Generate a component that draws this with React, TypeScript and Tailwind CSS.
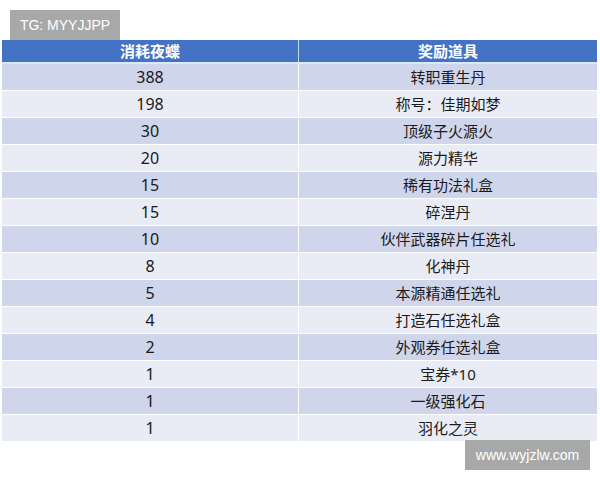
import React from "react";

const rows: [string, string][] = [
  ["388", "转职重生丹"],
  ["198", "称号：佳期如梦"],
  ["30", "顶级子火源火"],
  ["20", "源力精华"],
  ["15", "稀有功法礼盒"],
  ["15", "碎涅丹"],
  ["10", "伙伴武器碎片任选礼"],
  ["8", "化神丹"],
  ["5", "本源精通任选礼"],
  ["4", "打造石任选礼盒"],
  ["2", "外观券任选礼盒"],
  ["1", "宝券*10"],
  ["1", "一级强化石"],
  ["1", "羽化之灵"],
];

const App: React.FC = () => {
  return (
    <div
      className="relative w-[600px] h-[480px] bg-white overflow-hidden"
      style={{ fontFamily: '"Noto Sans", "Noto Sans CJK SC", sans-serif' }}
    >
      {/* 水印 */}
      <div className="absolute left-[10px] top-[10px] w-[110px] h-[30px] bg-[#a8a8a8] flex items-center justify-center text-white text-[14px] font-['Liberation_Sans',sans-serif]">
        TG: MYYJJPP
      </div>

      <div className="pt-[40px] pl-[2px] w-[597px]">
        {/* 表头 */}
        <div className="grid grid-cols-[297px_1fr] h-[22px] bg-[#4472c4] text-white font-bold text-[15px] leading-[22px] text-center">
          <div className="border-r border-[#bdd7ee]">消耗夜蝶</div>
          <div>奖励道具</div>
        </div>
        <div className="h-[2px] bg-[#dbe8f7]" />
        {rows.map(([cost, item], i) => (
          <div
            key={i}
            className={`grid grid-cols-[297px_1fr] h-[27px] border-b border-white text-[15px] text-[#1a1a1a] leading-[26px] text-center ${
              i % 2 === 0 ? "bg-[#cfd5ea]" : "bg-[#e9ebf5]"
            }`}
          >
            <div className="border-r border-white text-[16px]">{cost}</div>
            <div>{item}</div>
          </div>
        ))}
      </div>

      <div className="absolute left-[465px] top-[440px] w-[125px] h-[30px] bg-[#a8a8a8] flex items-center justify-center text-white text-[14px] font-['Liberation_Sans',sans-serif]">
        www.wyjzlw.com
      </div>
    </div>
  );
};

export default App;
